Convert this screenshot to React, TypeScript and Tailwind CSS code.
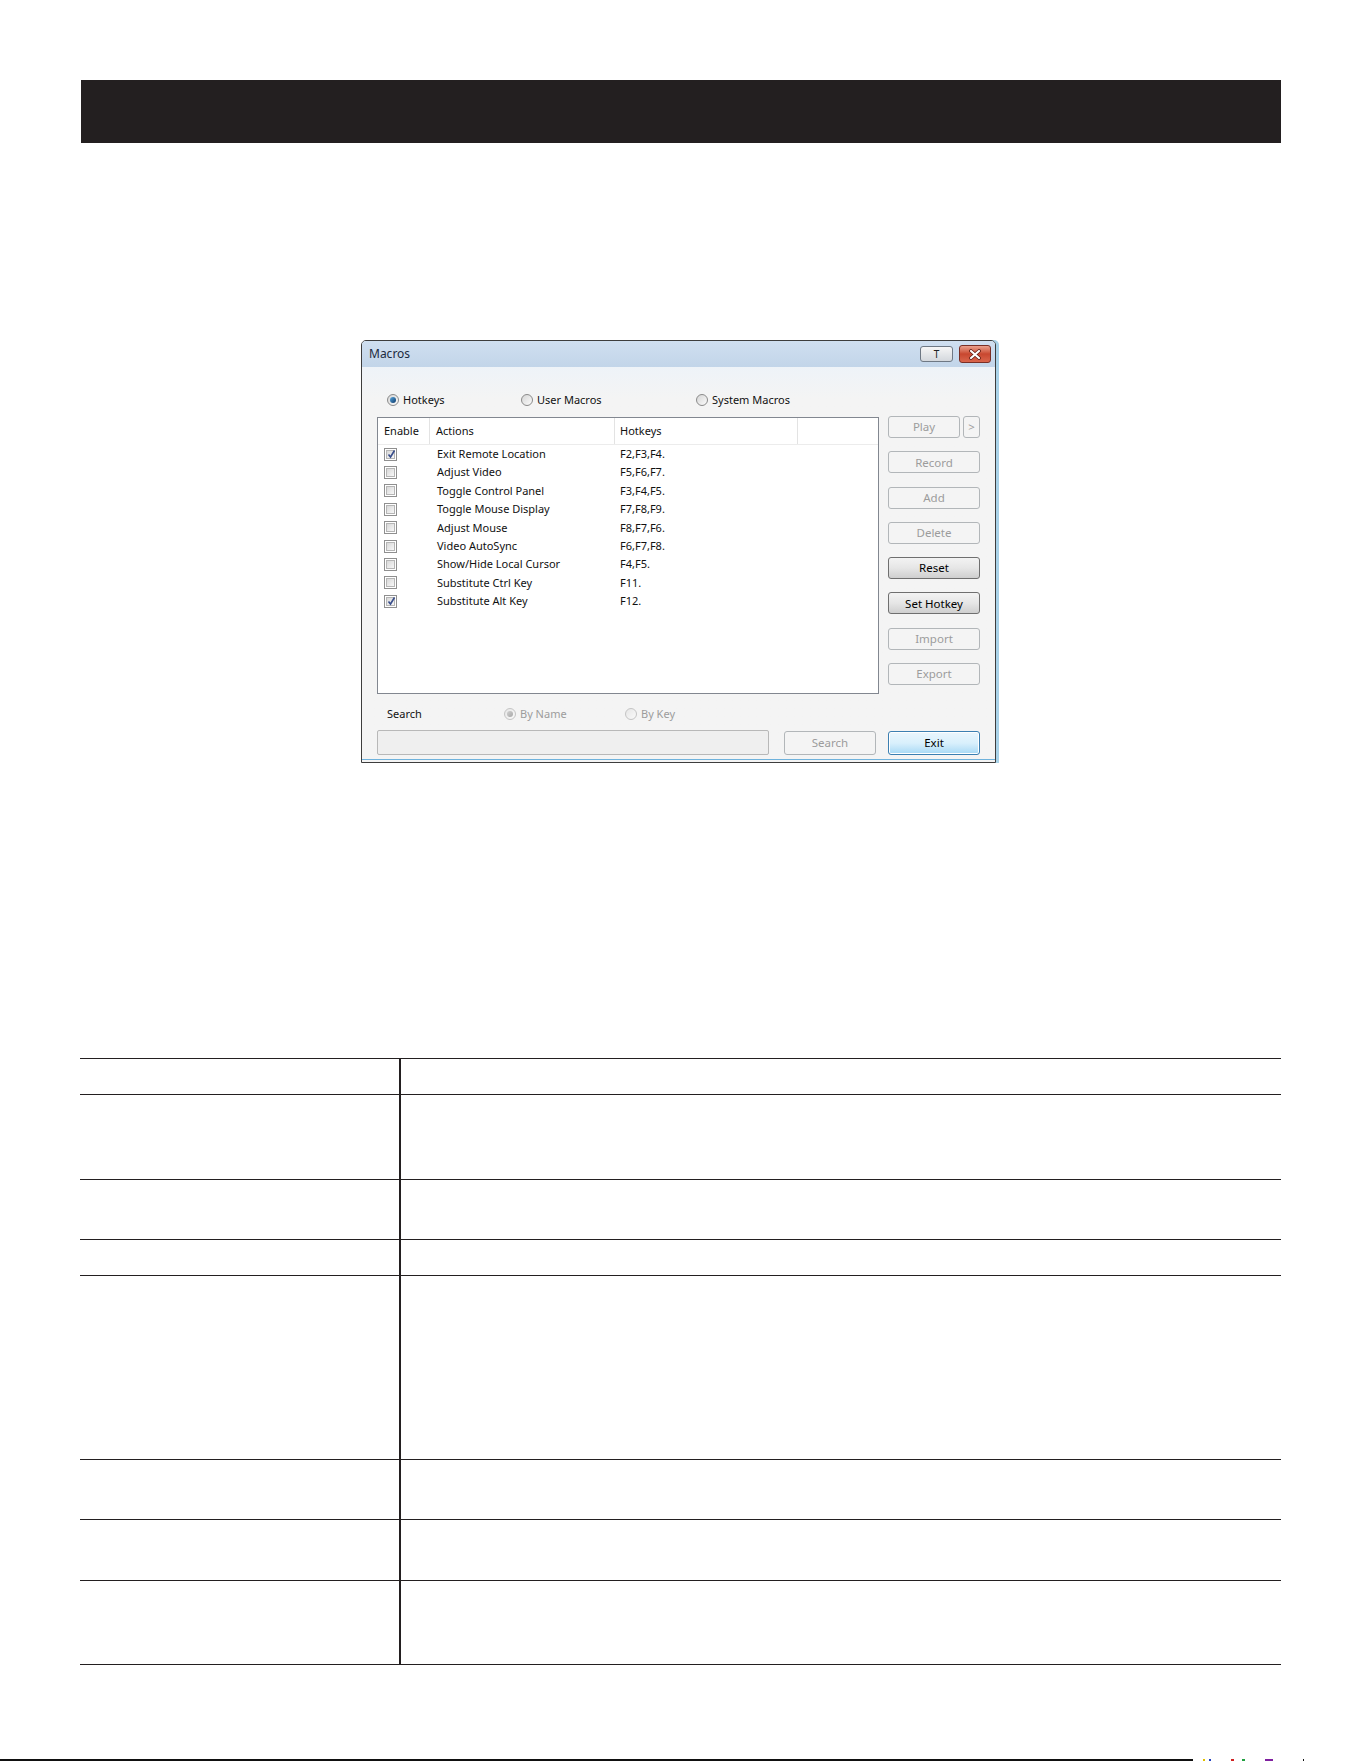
import React from "react";

const rows: { name: string; keys: string; checked: boolean }[] = [
  { name: "Exit Remote Location", keys: "F2,F3,F4.", checked: true },
  { name: "Adjust Video", keys: "F5,F6,F7.", checked: false },
  { name: "Toggle Control Panel", keys: "F3,F4,F5.", checked: false },
  { name: "Toggle Mouse Display", keys: "F7,F8,F9.", checked: false },
  { name: "Adjust Mouse", keys: "F8,F7,F6.", checked: false },
  { name: "Video AutoSync", keys: "F6,F7,F8.", checked: false },
  { name: "Show/Hide Local Cursor", keys: "F4,F5.", checked: false },
  { name: "Substitute Ctrl Key", keys: "F11.", checked: false },
  { name: "Substitute Alt Key", keys: "F12.", checked: true },
];

function Checkbox({ checked }: { checked: boolean }) {
  return (
    <span className="relative flex h-[13px] w-[13px] items-center justify-center border border-[#8f8f8f] bg-white">
      <span className="h-[9px] w-[9px] border border-[#b5b5b5] bg-gradient-to-br from-[#d8d8d8] to-[#f7f7f7]" />
      {checked && (
        <svg className="absolute left-[1px] top-[0px]" width="11" height="11" viewBox="0 0 11 11">
          <path d="M2.5 5.5 L4.5 8 L8.5 1.5" fill="none" stroke="#3a4f8c" strokeWidth="1.6" />
        </svg>
      )}
    </span>
  );
}

function Radio({ selected, disabled }: { selected: boolean; disabled?: boolean }) {
  return (
    <span
      className={
        disabled
          ? "flex h-[12px] w-[12px] items-center justify-center rounded-full border border-[#c4c4c4] bg-gradient-to-br from-[#e6e6e6] to-[#fafafa]"
          : "flex h-[12px] w-[12px] items-center justify-center rounded-full border border-[#8a8a8a] bg-gradient-to-br from-[#d6d6d6] to-[#fbfbfb]"
      }
    >
      {selected &&
        (disabled ? (
          <span className="h-[6px] w-[6px] rounded-full bg-gradient-to-br from-[#d0d0d0] to-[#a8a8a8]" />
        ) : (
          <span className="h-[6px] w-[6px] rounded-full bg-gradient-to-br from-[#59a8e0] to-[#0d3a6a]" />
        ))}
    </span>
  );
}

function DisabledBtn({ label, w }: { label: string; w: string }) {
  return (
    <div
      className={`${w} flex h-[22px] items-center justify-center rounded-[3px] border border-[#b2b6b9] bg-[#f4f4f4] text-[11.5px] text-[#9c9c9c]`}
    >
      {label}
    </div>
  );
}

function EnabledBtn({ label }: { label: string }) {
  return (
    <div className="flex h-[22px] w-[92px] items-center justify-center rounded-[3px] border border-[#6f6f6f] bg-gradient-to-b from-[#f3f3f3] via-[#e6e6e6] to-[#cfcfcf] text-[11.5px] text-[#000]">
      {label}
    </div>
  );
}

export default function App() {
  return (
    <div className="relative flex h-[1761px] w-[1361px] flex-col bg-white font-['Noto_Sans',sans-serif]">
      {/* Header bar */}
      <div className="ml-[81px] mt-[80px] h-[63px] w-[1200px] bg-[#231f20]" />

      {/* Dialog */}
      <div className="ml-[361px] mt-[197px] flex h-[423px] w-[635px] flex-col overflow-hidden rounded-t-[5px] border border-[#3d3d3d] bg-[#f4f4f4] shadow-[3px_0_0_0_#a9d2e8]">
        {/* Title bar */}
        <div className="flex h-[26px] items-center justify-between bg-gradient-to-b from-[#cfdff0] to-[#c2d5e9] pl-[7px] pr-[4px]">
          <span className="text-[12px] text-[#1b2a40]">Macros</span>
          <div className="flex items-center gap-[6px]">
            <div className="flex h-[16px] w-[33px] items-center justify-center rounded-[3px] border border-[#6e7884] bg-gradient-to-b from-[#f6f6f6] to-[#d4d8dd] text-[10px] leading-none text-[#222]">
              T
            </div>
            <div className="flex h-[18px] w-[32px] items-center justify-center rounded-[3px] border border-[#7a2f25] bg-gradient-to-b from-[#eaa08c] via-[#c8472f] to-[#d9654c]">
              <svg width="14" height="11" viewBox="0 0 14 11">
                <path d="M3 2 L11 9 M11 2 L3 9" stroke="#5a1a12" strokeWidth="3.6" strokeLinecap="round" />
                <path d="M3 2 L11 9 M11 2 L3 9" stroke="#ffffff" strokeWidth="2.2" strokeLinecap="round" />
              </svg>
            </div>
          </div>
        </div>

        {/* Body */}
        <div className="flex flex-1 flex-col bg-gradient-to-b from-[#eef3f8] to-[#f4f4f4] to-[8%] px-[15px] text-[11px] text-[#111]">
          {/* Radio row */}
          <div className="mt-[25px] flex h-[16px] items-center">
            <div className="ml-[10px] flex w-[134px] items-center gap-[4px]">
              <Radio selected />
              <span>Hotkeys</span>
            </div>
            <div className="flex w-[175px] items-center gap-[4px]">
              <Radio selected={false} />
              <span>User Macros</span>
            </div>
            <div className="flex items-center gap-[4px]">
              <Radio selected={false} />
              <span>System Macros</span>
            </div>
          </div>

          {/* Main area */}
          <div className="mt-[8px] flex gap-[9px]">
            <div className="mt-[1px] flex h-[277px] w-[502px] flex-col border border-[#828790] bg-white">
              <div className="flex h-[27px] border-b border-[#ececec]">
                <div className="flex w-[52px] items-center border-r border-[#e3e3e3] pl-[6px]">Enable</div>
                <div className="flex w-[185px] items-center border-r border-[#e3e3e3] pl-[6px]">Actions</div>
                <div className="flex w-[183px] items-center border-r border-[#e3e3e3] pl-[5px]">Hotkeys</div>
                <div className="flex-1" />
              </div>
              {rows.map((r) => (
                <div key={r.name} className="flex h-[18.4px] items-center">
                  <div className="flex w-[52px] items-center pl-[6px]">
                    <Checkbox checked={r.checked} />
                  </div>
                  <div className="w-[185px] pl-[7px]">{r.name}</div>
                  <div className="pl-[5px]">{r.keys}</div>
                </div>
              ))}
            </div>

            <div className="flex w-[92px] flex-col gap-[13.25px]">
              <div className="flex gap-[3px]">
                <DisabledBtn label="Play" w="w-[72px]" />
                <DisabledBtn label=">" w="w-[17px]" />
              </div>
              <DisabledBtn label="Record" w="w-[92px]" />
              <DisabledBtn label="Add" w="w-[92px]" />
              <DisabledBtn label="Delete" w="w-[92px]" />
              <EnabledBtn label="Reset" />
              <EnabledBtn label="Set Hotkey" />
              <DisabledBtn label="Import" w="w-[92px]" />
              <DisabledBtn label="Export" w="w-[92px]" />
            </div>
          </div>

          {/* Search options row */}
          <div className="mt-[12px] flex h-[16px] items-center">
            <div className="ml-[10px] w-[117px]">Search</div>
            <div className="flex w-[121px] items-center gap-[4px] text-[#9c9c9c]">
              <Radio selected disabled />
              <span>By Name</span>
            </div>
            <div className="flex items-center gap-[4px] text-[#9c9c9c]">
              <Radio selected={false} disabled />
              <span>By Key</span>
            </div>
          </div>

          {/* Bottom row */}
          <div className="mt-[8px] flex items-start">
            <div className="h-[25px] w-[392px] rounded-[2px] border border-[#b8b8b8] bg-[#efefef]" />
            <div className="ml-[15px] mt-[1px] flex h-[24px] w-[92px] items-center justify-center rounded-[3px] border border-[#b2b6b9] bg-[#f4f4f4] text-[11.5px] text-[#9c9c9c]">
              Search
            </div>
            <div className="ml-[12px] mt-[1px] flex h-[24px] w-[92px] items-center justify-center rounded-[3px] border border-[#3c7fb1] bg-gradient-to-b from-[#eaf6fd] via-[#d9f0fc] to-[#a7d9f5] text-[11.5px] text-[#000] shadow-[inset_0_0_0_1px_#ffffff]">
              Exit
            </div>
          </div>

          <div className="-mx-[15px] mb-[2px] mt-auto h-[1px] bg-[#6fb2dc]" />
        </div>
      </div>

      {/* Table */}
      <div className="ml-[80px] mt-[295px] flex w-[1201px] flex-col border-b border-[#231f20]">
        {[36, 85, 60, 36, 184, 60, 61, 84].map((h, i) => (
          <div key={i} className="flex border-t border-[#231f20]" style={{ height: h }}>
            <div className="w-[321px] border-r-2 border-[#231f20]" />
            <div className="flex-1" />
          </div>
        ))}
      </div>

      {/* Bottom edge line */}
      <div className="mt-auto flex h-[2px] items-end">
        <div className="h-[2px] w-[1193px] bg-[#111]" />
        <div className="ml-[10px] h-[2px] w-[2px] bg-[#e0c000]" />
        <div className="ml-[4px] h-[2px] w-[2px] bg-[#2040c0]" />
        <div className="ml-[20px] h-[2px] w-[3px] bg-[#d02020]" />
        <div className="ml-[8px] h-[2px] w-[3px] bg-[#20a040]" />
        <div className="ml-[20px] h-[2px] w-[8px] bg-[#8020a0]" />
        <div className="ml-[30px] h-[2px] w-[1px] bg-[#111]" />
      </div>
    </div>
  );
}
